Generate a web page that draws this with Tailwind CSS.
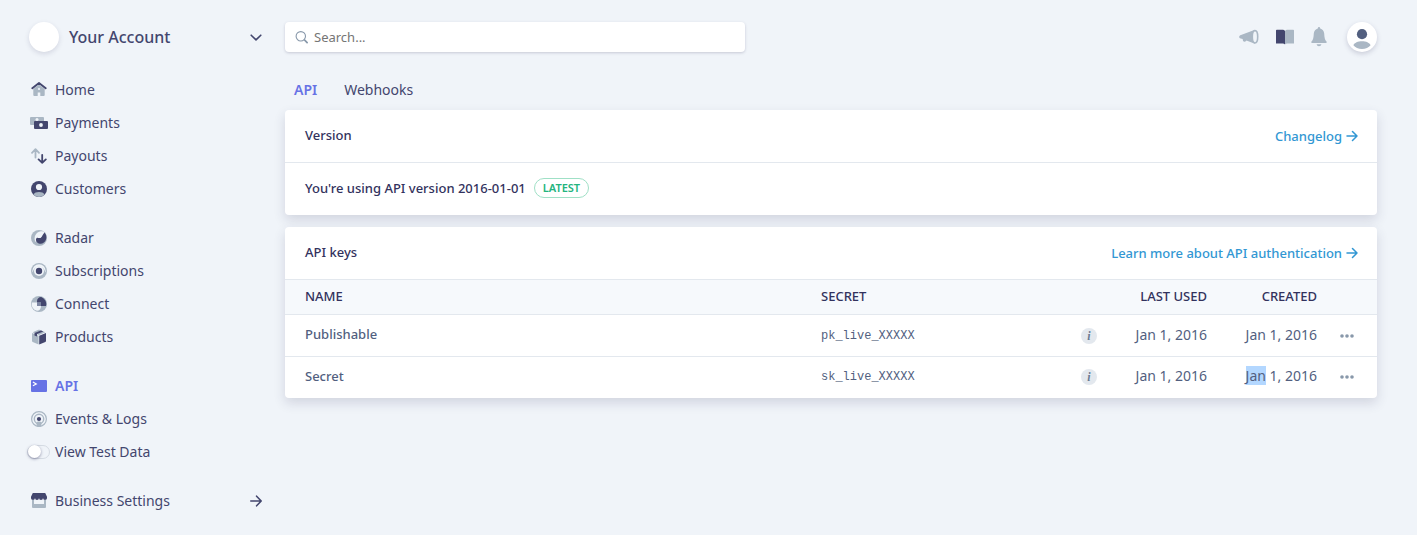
<!DOCTYPE html>
<html lang="en">
<head>
<meta charset="utf-8">
<meta name="viewport" content="width=device-width, initial-scale=1">
<title>API keys</title>
<script src="https://cdn.jsdelivr.net/npm/@tailwindcss/browser@4"></script>
</head>
<body class="min-h-screen bg-[#f0f4f9] font-['Noto_Sans',sans-serif] text-sm text-[#43466e]">
<div class="flex min-h-screen">
  <aside class="w-[285px] shrink-0 pt-[22px] pl-[29px] pr-[23px]">
    <button type="button" class="flex h-[30px] w-full items-center text-left text-base font-medium">
      <span class="mr-[10px] size-[30px] rounded-full bg-white shadow-[0_2px_5px_rgba(50,50,93,0.15)]"></span>
      <span class="grow">Your Account</span>
      <svg class="size-3" viewBox="0 0 12 12" fill="none" stroke="currentColor" stroke-width="1.6" stroke-linecap="round" stroke-linejoin="round"><path d="M1.2 4.200 6 8.900l4.800-4.700"/></svg>
    </button>
    <nav class="mt-[21px] flex flex-col gap-4 pl-[2px]" aria-label="Main">
      <ul>
        <li><a href="#" class="flex h-[33px] items-center gap-2">
          <svg class="size-4" viewBox="0 0 16 16"><path fill="#aab7c4" d="M2.300 7 8 2.400 13.700 7V13a1 1 0 0 1-1 1H9.300v-3.400H6.700V14H3.300a1 1 0 0 1-1-1z"/><circle cx="8" cy="7" r="1.100" fill="#f0f4f9"/><path fill="none" stroke="#43466e" stroke-width="1.900" stroke-linecap="round" stroke-linejoin="round" d="M1.300 6.200 8 1l6.700 5.200"/></svg>
          Home</a></li>
        <li><a href="#" class="flex h-[33px] items-center gap-2">
          <svg class="size-4 overflow-visible" viewBox="0 0 16 16"><rect x="-1" y="2" width="14" height="8" rx="1" fill="#aab7c4"/><circle cx="6" cy="4.600" r="1.500" fill="#f0f4f9"/><rect x="3" y="6" width="14" height="8" rx="1" fill="#43466e"/><circle cx="10" cy="10" r="1.900" fill="#f0f4f9"/></svg>
          Payments</a></li>
        <li><a href="#" class="flex h-[33px] items-center gap-2">
          <svg class="size-4" viewBox="0 0 16 16" fill="none" stroke-width="1.800" stroke-linecap="round" stroke-linejoin="round"><path stroke="#aab7c4" d="M4.500 9.600V1.400M1 4.800l3.500-3.600L8 4.800"/><path stroke="#43466e" d="M11.200 6.800v8M7.600 11.400l3.600 3.500 3.600-3.500"/></svg>
          Payouts</a></li>
        <li><a href="#" class="flex h-[33px] items-center gap-2">
          <svg class="size-4" viewBox="0 0 16 16"><circle cx="8" cy="8" r="8" fill="#43466e"/><circle cx="8" cy="6" r="3.100" fill="#f0f4f9"/><path fill="#aab7c4" d="M2.300 13.600C3.300 11.800 5.500 11 8 11s4.700.8 5.700 2.600A8 8 0 0 1 8 16a8 8 0 0 1-5.700-2.400z"/></svg>
          Customers</a></li>
      </ul>
      <ul>
        <li><a href="#" class="flex h-[33px] items-center gap-2">
          <svg class="size-4" viewBox="0 0 16 16"><circle cx="8" cy="8" r="8" fill="#aab7c4"/><path fill="#f0f4f9" d="M4.500 12C2 7 5 2.500 9 1.500c1.800-.4 3.500 0 4.300.9L9.800 8.500z"/><path fill="#43466e" d="M13.700 2.400A8 8 0 0 1 15 9.500c-.8 2.700-3.500 4.600-6.300 4.200C6.300 13.400 4.700 11.500 5 9.300c.1-1 1-1.700 2-1.400 1.500.4 2.800.1 3.600-1 1-1.400 1.500-3 3.100-4.500z"/></svg>
          Radar</a></li>
        <li><a href="#" class="flex h-[33px] items-center gap-2">
          <svg class="size-4" viewBox="0 0 16 16"><circle cx="8" cy="8" r="8" fill="#aab7c4"/><path fill="#f0f4f9" d="M8 1.200A6.700 6.700 0 0 1 14.700 8c0 .6-.2 1-.4 1.500C13.700 6 11.200 3.600 8 3.600S2.300 6 1.700 9.500C1.500 9 1.300 8.600 1.300 8A6.700 6.700 0 0 1 8 1.200z"/><circle cx="8" cy="8" r="5" fill="#f0f4f9"/><circle cx="8" cy="8" r="3.200" fill="#43466e"/></svg>
          Subscriptions</a></li>
        <li><a href="#" class="flex h-[33px] items-center gap-2">
          <svg class="size-4" viewBox="0 0 16 16"><circle cx="8" cy="8" r="8" fill="#aab7c4"/><path fill="#43466e" d="M6 5C6 2.500 8 .8 10.200.9A7.600 7.600 0 0 1 15 10h-5V6.500H6z"/><path fill="#f0f4f9" d="M1 6.500h5V10h4c0 3-1.500 4.800-4 4.800A6.600 6.600 0 0 1 1 6.500z"/><path fill="#7d86a3" d="M6 6.500h4V10H6z"/></svg>
          Connect</a></li>
        <li><a href="#" class="flex h-[33px] items-center gap-2">
          <svg class="size-4" viewBox="0 0 16 16"><path fill="#aab7c4" d="M1 4 7.600 6.800V15.600L1.700 13A1.200 1.200 0 0 1 1 12z"/><path fill="#43466e" d="M15 4 8.200 6.800v8.800L14.300 13a1.200 1.200 0 0 0 .7-1z"/><path fill="#aab7c4" d="M1.600 3.300 7.400.8h1.200l5.800 2.500L8 6z"/><path fill="#43466e" d="M3.500 4.100 10 1.400l2.300 1L6 5.100v2.500L3.500 6.500z"/></svg>
          Products</a></li>
      </ul>
      <ul>
        <li><a href="#" aria-current="page" class="flex h-[33px] items-center gap-2 font-semibold text-[#6772e5]">
          <svg class="size-4" viewBox="0 0 16 16"><rect y="2" width="16" height="12" rx="1" fill="#6772e5"/><path fill="none" stroke="#fff" stroke-width="1.200" d="m1.900 4 3.400 1.900-3.400 1.900"/></svg>
          API</a></li>
        <li><a href="#" class="flex h-[33px] items-center gap-2">
          <svg class="size-4" viewBox="0 0 16 16"><g fill="none" stroke="#aab7c4"><circle cx="8" cy="8" r="7.400" stroke-width="1.200"/><circle cx="8" cy="8" r="4.700" stroke-width="1.400"/></g><path fill="#aab7c4" d="M5.400 12.200C5.400 11 6.500 10.500 8 10.500s2.600.5 2.600 1.700L10 15.800H6z"/><circle cx="8" cy="8" r="2.100" fill="#43466e"/></svg>
          Events &amp; Logs</a></li>
        <li><label class="-ml-1 flex h-[33px] cursor-pointer items-center gap-[5px]">
          <input type="checkbox" class="h-[14px] w-[23px] appearance-none rounded-full border border-[#d5dbe3] bg-[#f0f4f9] before:-mt-px before:block before:size-[13px] before:rounded-full before:bg-white before:shadow-[0_1px_3px_rgba(50,50,93,0.5)] before:content-['']">
          View Test Data</label></li>
      </ul>
      <ul>
        <li><a href="#" class="flex h-[33px] items-center gap-2">
          <svg class="size-4" viewBox="0 0 16 16"><path fill="#aab7c4" d="M1 6h14v8a1 1 0 0 1-1 1H2a1 1 0 0 1-1-1z"/><path fill="#f0f4f9" d="M3 6h10v5H3z"/><path fill="#43466e" d="M1.800 0h12.400L16 3.700v1a2 2 0 0 1-4 .3 2 2 0 0 1-4 0 2 2 0 0 1-4 0 2 2 0 0 1-4-.3v-1z"/></svg>
          <span class="grow">Business Settings</span>
          <svg class="size-3" viewBox="0 0 12 12" fill="none" stroke="currentColor" stroke-width="1.600" stroke-linecap="round" stroke-linejoin="round"><path d="M.8 6h10.400M6.600 1.200 11.200 6l-4.600 4.800"/></svg></a></li>
      </ul>
    </nav>
  </aside>

  <div class="min-w-0 grow pt-[22px] pr-10">
    <header class="flex h-[30px] items-center justify-between">
      <label class="flex h-[30px] w-[460px] items-center gap-[6px] rounded bg-white pl-[10px] shadow-[0_1px_3px_rgba(50,50,93,0.22)]">
        <svg class="size-[13px]" viewBox="0 0 13 13" fill="none" stroke="#8898aa"><circle cx="5.800" cy="5.300" r="4.700" stroke-width="1.100"/><path stroke-width="1.700" stroke-linecap="round" d="m9.700 9.200 2.400 2.400"/></svg>
        <input type="search" aria-label="Search" placeholder="Search..." class="h-full min-w-0 grow bg-transparent text-[13px] outline-none placeholder:text-[#757575]">
      </label>
      <div class="flex items-center">
        <button type="button" aria-label="Announcements" class="mr-[17px]"><svg class="h-4 w-5" viewBox="0 0 20 16"><path fill="#aab7c4" d="M16 .8 2 6C.9 6.400.2 7 .2 7.900s.5 1.300 1.500 1.600l2 .6c0 1.600.5 2.700 1.900 2.700 1 0 1.500-.5 1.800-1.200L16 14.800z"/><ellipse cx="16" cy="7.800" rx="2.700" ry="6.200" fill="#f0f4f9" stroke="#aab7c4" stroke-width="1.600"/></svg></button>
        <button type="button" aria-label="Documentation" class="mr-[17px]"><svg class="h-4 w-[18px]" viewBox="0 0 18 16"><path fill="#43466e" d="M0 1.600a.8.800 0 0 1 .8-.8H6C7.500.8 8.600 1.200 9 2v13.600c-.6-.8-1.500-1.100-3-1.100H0z"/><path fill="#aab7c4" d="M18 1.600a.8.800 0 0 0-.8-.8H12C10.500.8 9.400 1.200 9 2v13.600c.6-.8 1.500-1.100 3-1.100h6z"/></svg></button>
        <button type="button" aria-label="Notifications" class="mr-5"><svg class="h-5 w-4" viewBox="0 0 16 20"><path fill="#aab7c4" d="M8 0c.7 0 1.200.6 1.200 1.600 2.200.6 3.800 2.300 4 5 .2 3.800.7 6.600 2.300 8 .5.600.2 1.400-.5 1.400H1c-.7 0-1-.8-.5-1.400 1.600-1.400 2.100-4.200 2.300-8 .2-2.700 1.800-4.400 4-5C6.800.6 7.300 0 8 0zM5.600 17.200h4.800C10.200 18.500 9.200 19.200 8 19.200s-2.200-.7-2.400-2z"/></svg></button>
        <button type="button" aria-label="Profile" class="flex size-[30px] items-center justify-center rounded-full bg-white shadow-[0_2px_5px_rgba(50,50,93,0.2)]"><svg class="size-[30px]" viewBox="0 0 30 30"><circle cx="15" cy="12.200" r="5.100" fill="#525f7f"/><path fill="#aab7c4" d="M6.400 23.200c1-2.500 4.500-4 8.600-4s7.600 1.500 8.600 4c-1.800 2.300-5 3.700-8.600 3.700s-6.800-1.400-8.600-3.700z"/></svg></button>
      </div>
    </header>

    <nav class="mt-[28px] flex h-[20px] gap-[27px] pl-[9px] leading-5" aria-label="Developers">
      <a href="#" aria-current="page" class="font-semibold text-[#6772e5]">API</a>
      <a href="#">Webhooks</a>
    </nav>

    <main class="mt-[10px] flex flex-col gap-3 text-[13px]">
      <section class="rounded bg-white text-[#32325d] shadow-[0_5px_12px_rgba(50,50,93,0.16)]">
        <div class="flex h-[53px] items-center justify-between border-b border-[#e3e8ee] pr-[19px] pl-5">
          <h2 class="pb-[2px] font-medium">Version</h2>
          <a href="#" class="flex items-center gap-1 font-medium text-[#3297d3]">Changelog
            <svg class="size-3" viewBox="0 0 12 12" fill="none" stroke="currentColor" stroke-width="1.500" stroke-linecap="round" stroke-linejoin="round"><path d="M1 6h10M6.500 1.500 11 6l-4.500 4.500"/></svg></a>
        </div>
        <p class="flex h-[52px] items-center gap-2 px-5 pb-[2px] font-medium">You're using API version 2016-01-01
          <span class="flex h-5 items-center rounded-full border border-[#9fe0c6] px-2 text-[11px] font-semibold text-[#24b47e]">LATEST</span></p>
      </section>

      <section class="rounded bg-white text-[#32325d] shadow-[0_5px_12px_rgba(50,50,93,0.16)]">
        <div class="flex h-[52px] items-center justify-between pr-[19px] pl-5">
          <h2 class="pb-[2px] font-medium">API keys</h2>
          <a href="#" class="flex items-center gap-1 font-medium text-[#3297d3]">Learn more about API authentication
            <svg class="size-3" viewBox="0 0 12 12" fill="none" stroke="currentColor" stroke-width="1.500" stroke-linecap="round" stroke-linejoin="round"><path d="M1 6h10M6.500 1.500 11 6l-4.500 4.500"/></svg></a>
        </div>
        <table class="w-full table-fixed text-left text-[#525f7f]">
          <colgroup><col><col class="w-[260px]"><col class="w-[16px]"><col class="w-[110px]"><col class="w-[110px]"><col class="w-[60px]"></colgroup>
          <thead>
            <tr class="h-[35px] border-t border-[#e3e8ee] bg-[#f6f9fc] text-[#32325d]">
              <th scope="col" class="pb-[2px] pl-5 font-medium">NAME</th>
              <th scope="col" class="pb-[2px] font-medium">SECRET</th>
              <td></td>
              <th scope="col" class="pb-[2px] text-right font-medium">LAST USED</th>
              <th scope="col" class="pb-[2px] text-right font-medium">CREATED</th>
              <td></td>
            </tr>
          </thead>
          <tbody>
            <tr class="h-[42px] border-t border-[#e3e8ee]">
              <th scope="row" class="pb-[2px] pl-5 font-medium">Publishable</th>
              <td class="font-['Liberation_Mono',monospace] text-xs">pk_live_XXXXX</td>
              <td><button type="button" aria-label="About the publishable key" class="flex size-4 items-center justify-center rounded-full bg-[#e3e8ee] font-['Liberation_Serif',serif] text-xs font-bold text-[#6b7c93] italic">i</button></td>
              <td class="pb-[2px] text-right text-sm">Jan 1, 2016</td>
              <td class="pb-[2px] text-right text-sm">Jan 1, 2016</td>
              <td><button type="button" aria-label="Publishable key actions" class="ml-[23px] flex"><svg class="h-1 w-[14px]" viewBox="0 0 14 4" fill="#8898aa"><circle cx="2" cy="2" r="1.800"/><circle cx="7" cy="2" r="1.800"/><circle cx="12" cy="2" r="1.800"/></svg></button></td>
            </tr>
            <tr class="h-[41px] border-t border-[#e3e8ee]">
              <th scope="row" class="pb-[2px] pl-5 font-medium">Secret</th>
              <td class="font-['Liberation_Mono',monospace] text-xs">sk_live_XXXXX</td>
              <td><button type="button" aria-label="About the secret key" class="flex size-4 items-center justify-center rounded-full bg-[#e3e8ee] font-['Liberation_Serif',serif] text-xs font-bold text-[#6b7c93] italic">i</button></td>
              <td class="pb-[2px] text-right text-sm">Jan 1, 2016</td>
              <td class="pb-[2px] text-right text-sm"><mark class="bg-[#b3d7ff] text-inherit">Jan</mark> 1, 2016</td>
              <td><button type="button" aria-label="Secret key actions" class="ml-[23px] flex"><svg class="h-1 w-[14px]" viewBox="0 0 14 4" fill="#8898aa"><circle cx="2" cy="2" r="1.800"/><circle cx="7" cy="2" r="1.800"/><circle cx="12" cy="2" r="1.800"/></svg></button></td>
            </tr>
          </tbody>
        </table>
      </section>
    </main>
  </div>
</div>
</body>
</html>
